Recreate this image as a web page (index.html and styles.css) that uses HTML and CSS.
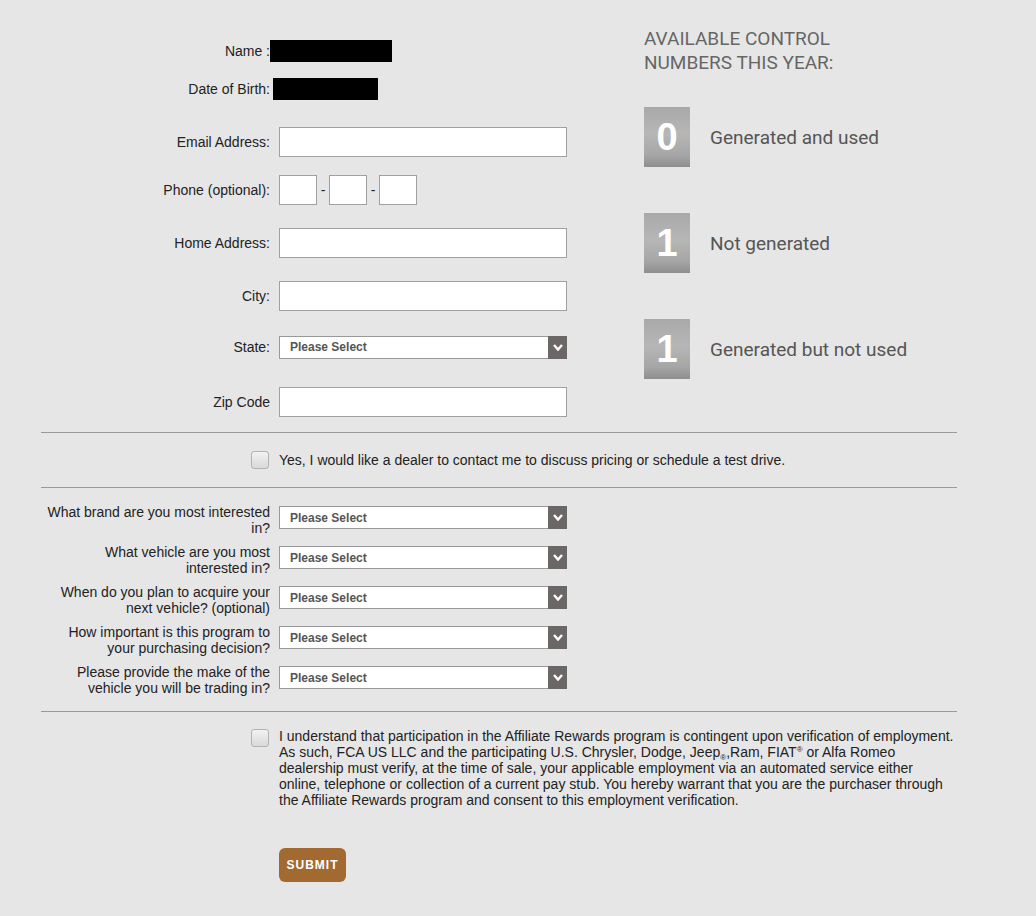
FILE: index.html
```html
<!DOCTYPE html>
<html lang="en">
<head>
    <meta charset="UTF-8">
    <meta name="viewport" content="width=device-width, initial-scale=1.0">
    <title>Affiliate Rewards</title>
    <link rel="stylesheet" href="styles.css">
</head>
<body>
    <div class="container">
        <div class="top">
            <div class="form-col">
                <div class="row row-name">
                    <label class="label">Name :</label>
                    <span class="redact redact-name"></span>
                </div>
                <div class="row row-dob">
                    <label class="label">Date of Birth:</label>
                    <span class="redact redact-dob"></span>
                </div>
                <div class="row row-email">
                    <label class="label">Email Address:</label>
                    <input class="text-input" type="text">
                </div>
                <div class="row row-phone">
                    <label class="label">Phone (optional):</label>
                    <div class="phone">
                        <input class="text-input phone-input" type="text">
                        <span class="dash">-</span>
                        <input class="text-input phone-input" type="text">
                        <span class="dash">-</span>
                        <input class="text-input phone-input" type="text">
                    </div>
                </div>
                <div class="row row-home">
                    <label class="label">Home Address:</label>
                    <input class="text-input" type="text">
                </div>
                <div class="row row-city">
                    <label class="label">City:</label>
                    <input class="text-input" type="text">
                </div>
                <div class="row row-state">
                    <label class="label">State:</label>
                    <div class="select">
                        <span class="select-text">Please Select</span>
                        <span class="select-arrow">
                            <svg width="10" height="7" viewBox="0 0 10 7"><path d="M1 1 L5 5.5 L9 1" fill="none" stroke="#fff" stroke-width="2.4"/></svg>
                        </span>
                    </div>
                </div>
                <div class="row row-zip">
                    <label class="label">Zip Code</label>
                    <input class="text-input" type="text">
                </div>
            </div>

            <div class="numbers">
                <h2 class="numbers-title">AVAILABLE CONTROL<br>NUMBERS THIS YEAR:</h2>
                <div class="num-item">
                    <span class="num-box">0</span>
                    <span class="num-label">Generated and used</span>
                </div>
                <div class="num-item">
                    <span class="num-box">1</span>
                    <span class="num-label">Not generated</span>
                </div>
                <div class="num-item">
                    <span class="num-box">1</span>
                    <span class="num-label">Generated but not used</span>
                </div>
            </div>
        </div>

        <hr class="rule rule-1">

        <div class="check-row check-dealer">
            <span class="checkbox"></span>
            <span class="check-text">Yes, I would like a dealer to contact me to discuss pricing or schedule a test drive.</span>
        </div>

        <hr class="rule rule-2">

        <div class="questions">
            <div class="q-row">
                <label class="label">What brand are you most interested in?</label>
                <div class="select q-select">
                    <span class="select-text">Please Select</span>
                    <span class="select-arrow"><svg width="10" height="7" viewBox="0 0 10 7"><path d="M1 1 L5 5.5 L9 1" fill="none" stroke="#fff" stroke-width="2.4"/></svg></span>
                </div>
            </div>
            <div class="q-row">
                <label class="label">What vehicle are you most interested in?</label>
                <div class="select q-select">
                    <span class="select-text">Please Select</span>
                    <span class="select-arrow"><svg width="10" height="7" viewBox="0 0 10 7"><path d="M1 1 L5 5.5 L9 1" fill="none" stroke="#fff" stroke-width="2.4"/></svg></span>
                </div>
            </div>
            <div class="q-row">
                <label class="label">When do you plan to acquire your next vehicle? (optional)</label>
                <div class="select q-select">
                    <span class="select-text">Please Select</span>
                    <span class="select-arrow"><svg width="10" height="7" viewBox="0 0 10 7"><path d="M1 1 L5 5.5 L9 1" fill="none" stroke="#fff" stroke-width="2.4"/></svg></span>
                </div>
            </div>
            <div class="q-row">
                <label class="label">How important is this program to your purchasing decision?</label>
                <div class="select q-select">
                    <span class="select-text">Please Select</span>
                    <span class="select-arrow"><svg width="10" height="7" viewBox="0 0 10 7"><path d="M1 1 L5 5.5 L9 1" fill="none" stroke="#fff" stroke-width="2.4"/></svg></span>
                </div>
            </div>
            <div class="q-row">
                <label class="label">Please provide the make of the vehicle you will be trading in?</label>
                <div class="select q-select">
                    <span class="select-text">Please Select</span>
                    <span class="select-arrow"><svg width="10" height="7" viewBox="0 0 10 7"><path d="M1 1 L5 5.5 L9 1" fill="none" stroke="#fff" stroke-width="2.4"/></svg></span>
                </div>
            </div>
        </div>

        <hr class="rule rule-3">

        <div class="check-row check-consent">
            <span class="checkbox"></span>
            <p class="consent-text">I understand that participation in the Affiliate Rewards program is contingent upon verification of employment. As such, FCA US LLC and the participating U.S. Chrysler, Dodge, Jeep<span class="reg reg-low">®</span>,Ram, FIAT<span class="reg reg-high">®</span> or Alfa Romeo dealership must verify, at the time of sale, your applicable employment via an automated service either online, telephone or collection of a current pay stub. You hereby warrant that you are the purchaser through the Affiliate Rewards program and consent to this employment verification.</p>
        </div>

        <button class="submit">SUBMIT</button>
    </div>
</body>
</html>
```

FILE: styles.css
```css
body {
    margin: 0;
    background: #e6e6e6;
    font-family: "Liberation Sans", Arial, sans-serif;
    font-size: 14px;
    color: #222;
}
.container {
    width: 916px;
    margin-left: 41px;
    padding-bottom: 34px;
}
.top {
    display: flex;
    align-items: flex-start;
}
.form-col {
    width: 603px;
    padding-top: 40px;
}
.row {
    display: flex;
    align-items: center;
    height: 30px;
    margin-top: 23px;
}
.row-name {
    height: 22px;
    margin-top: 0;
}
.row-dob {
    height: 22px;
    margin-top: 16px;
}
.row-email { margin-top: 27px; }
.row-phone { margin-top: 18px; }
.row-state { margin-top: 21px; }
.row-zip { margin-top: 25px; }

.label {
    width: 229px;
    box-sizing: border-box;
    padding-left: 2px;
    text-align: right;
    line-height: 16px;
    margin-right: 9px;
    flex-shrink: 0;
}
.row-name .label,
.row-dob .label {
    margin-right: 0;
}
.redact {
    display: block;
    height: 22px;
    background: #000;
}
.redact-name {
    width: 122px;
}
.redact-dob {
    width: 105px;
    margin-left: 3px;
}
.text-input {
    width: 288px;
    height: 30px;
    box-sizing: border-box;
    border: 1px solid #a0a0a0;
    background: #fff;
    margin: 0;
    padding: 0 6px;
    font-family: inherit;
    font-size: 14px;
}
.phone {
    display: flex;
    align-items: center;
}
.phone-input {
    width: 38px;
}
.dash {
    width: 12px;
    text-align: center;
    color: #222;
}
.select {
    position: relative;
    width: 288px;
    height: 23px;
    box-sizing: border-box;
    border: 1px solid #999;
    background: #fff;
    display: flex;
    align-items: center;
}
.select-text {
    padding-left: 10px;
    font-size: 12px;
    font-weight: bold;
    color: #555;
}
.select-arrow {
    position: absolute;
    top: -1px;
    right: -1px;
    width: 19px;
    height: 23px;
    background: #6b6767;
    display: flex;
    align-items: center;
    justify-content: center;
}

.numbers {
    padding-top: 27px;
}
.numbers-title {
    margin: 0 0 32px;
    font-family: Roboto, "Liberation Sans", sans-serif;
    font-weight: normal;
    font-size: 19px;
    line-height: 24px;
    color: #666;
}
.num-item {
    display: flex;
    align-items: center;
    margin-bottom: 46px;
}
.num-item:last-child {
    margin-bottom: 0;
}
.num-box {
    width: 46px;
    height: 60px;
    display: flex;
    align-items: center;
    justify-content: center;
    background: linear-gradient(#a9a9a9 0%, #b6b6b6 45%, #a6a6a6 80%, #8e8e8e 100%);
    color: #fff;
    font-family: "Liberation Sans", Arial, sans-serif;
    font-weight: bold;
    font-size: 38px;
}
.num-label {
    margin-left: 20px;
    font-family: Roboto, "Liberation Sans", sans-serif;
    font-size: 19px;
    color: #555;
}

.rule {
    border: none;
    border-top: 1px solid #999;
    margin: 0;
}
.rule-1 { margin-top: 15px; }
.rule-2 { margin-top: 17px; }
.rule-3 { margin-top: 15px; }

.check-row {
    display: flex;
    align-items: flex-start;
    padding-left: 210px;
}
.check-dealer {
    margin-top: 17px;
    align-items: center;
}
.check-consent {
    margin-top: 16px;
}
.checkbox {
    width: 18px;
    height: 18px;
    box-sizing: border-box;
    border: 1px solid #b3b3b3;
    border-radius: 3px;
    background: linear-gradient(#f2f2f2, #d9d9d9);
    flex-shrink: 0;
    margin-right: 10px;
}
.check-consent .checkbox {
    margin-top: 1px;
}
.check-text {
    line-height: 20px;
}
.consent-text {
    margin: 0;
    width: 678px;
    line-height: 16px;
}
.reg {
    font-size: 8px;
    line-height: 0;
}
.reg-low {
    vertical-align: -3px;
}
.reg-high {
    vertical-align: 5px;
}

.questions {
    margin-top: 16px;
}
.q-row {
    display: flex;
    align-items: flex-start;
    margin-bottom: 8px;
}
.q-row:last-child {
    margin-bottom: 0;
}
.q-row .label {
    min-height: 32px;
}
.q-select {
    margin-top: 2px;
}

.submit {
    display: block;
    margin: 40px 0 0 238px;
    width: 67px;
    height: 34px;
    border: none;
    border-radius: 6px;
    background: #a26a30;
    color: #fff;
    font-family: "Liberation Sans", Arial, sans-serif;
    font-size: 12px;
    font-weight: bold;
    letter-spacing: 1px;
    padding: 0;
    cursor: pointer;
}
```
